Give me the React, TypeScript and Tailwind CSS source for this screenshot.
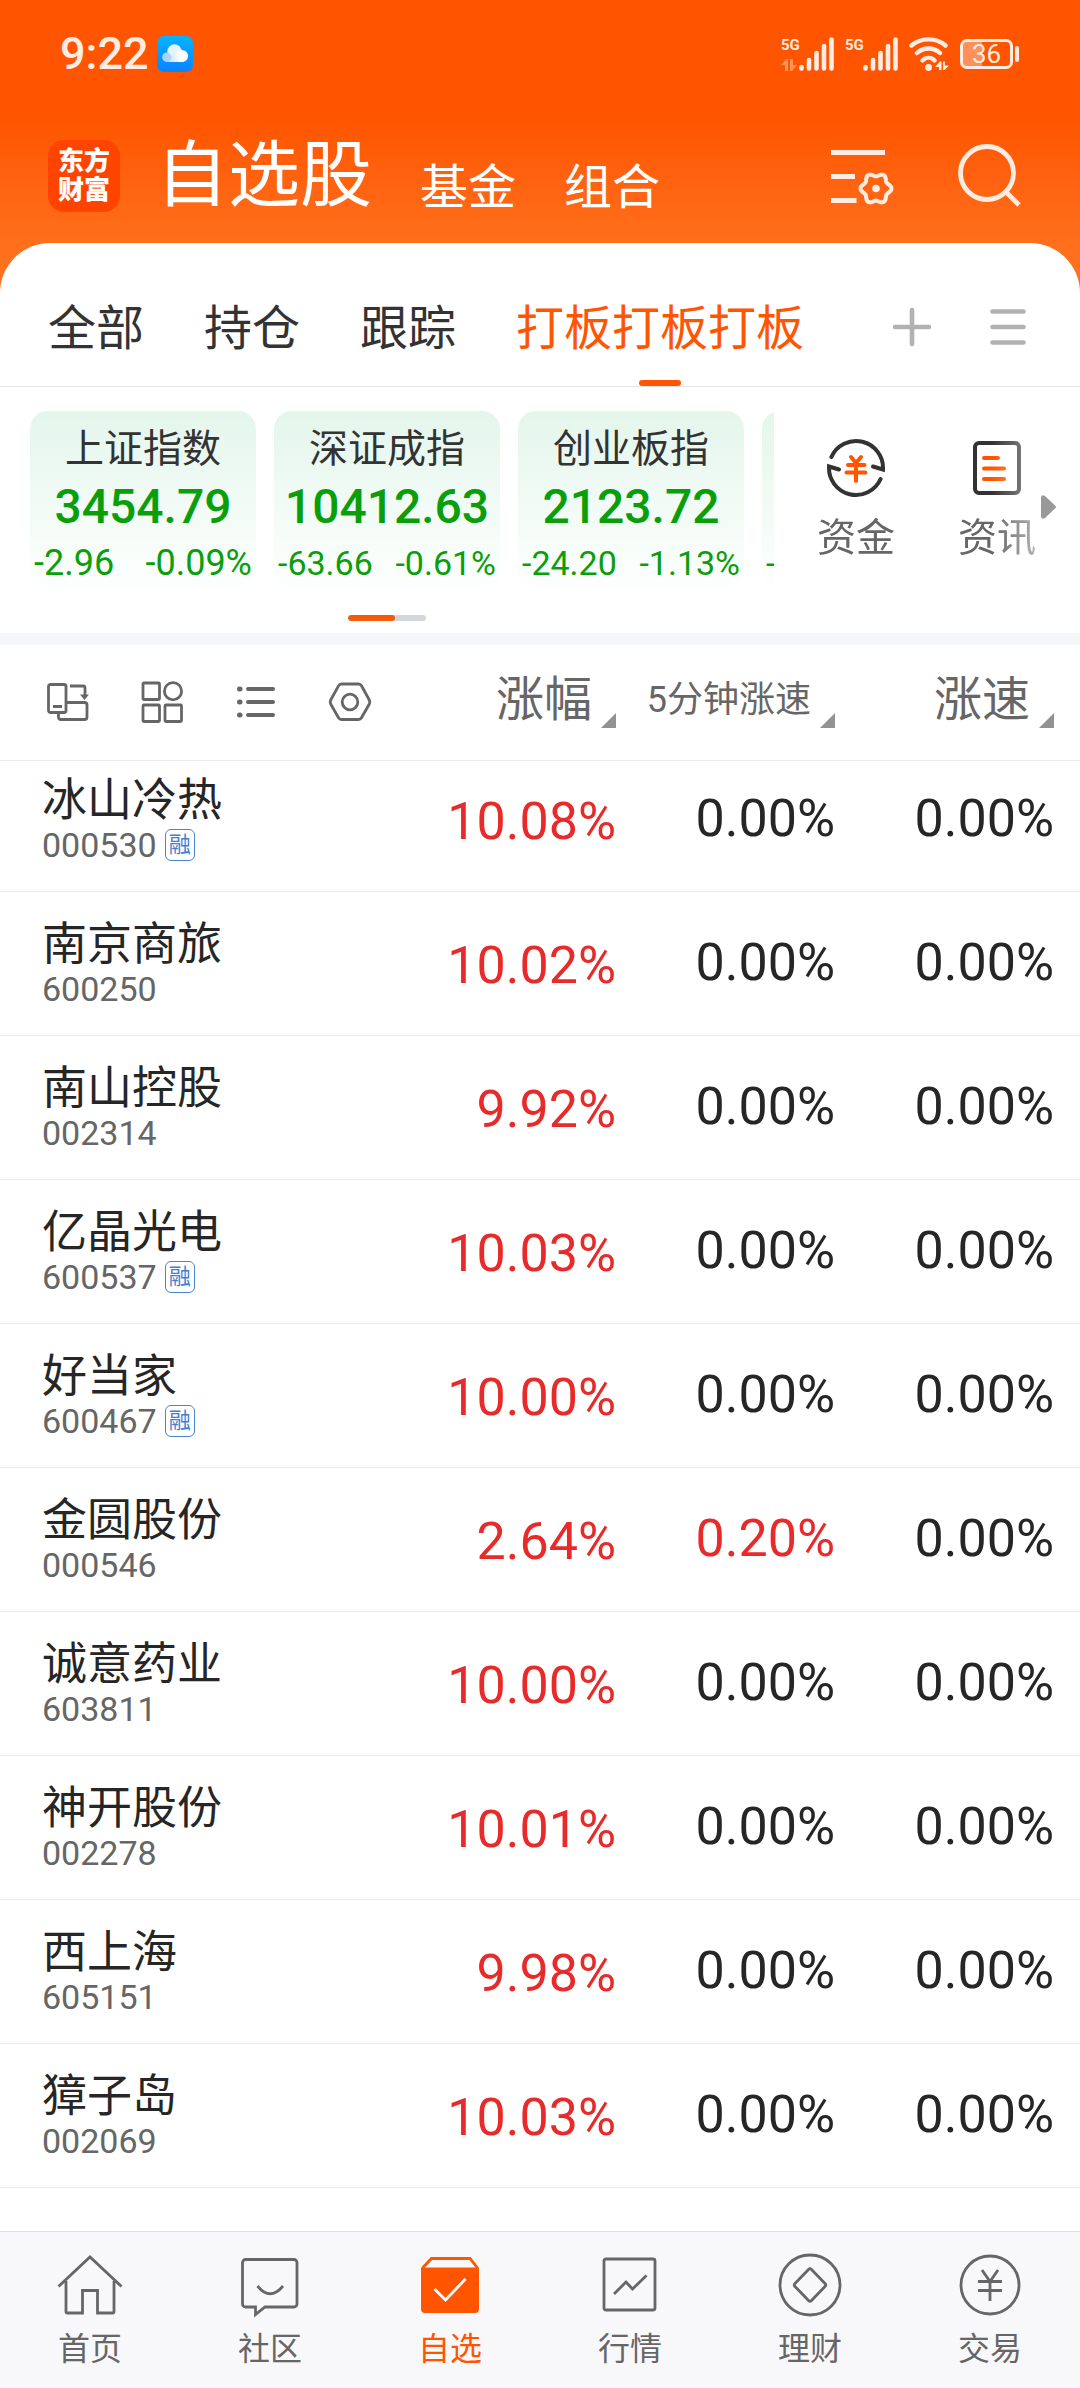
import React from "react";

type Stock = { name: string; code: string; margin?: boolean; change: string; fiveMin: string; speed: string };

const stocks: Stock[] = [
  { name: "冰山冷热", code: "000530", margin: true, change: "10.08%", fiveMin: "0.00%", speed: "0.00%" },
  { name: "南京商旅", code: "600250", change: "10.02%", fiveMin: "0.00%", speed: "0.00%" },
  { name: "南山控股", code: "002314", change: "9.92%", fiveMin: "0.00%", speed: "0.00%" },
  { name: "亿晶光电", code: "600537", margin: true, change: "10.03%", fiveMin: "0.00%", speed: "0.00%" },
  { name: "好当家", code: "600467", margin: true, change: "10.00%", fiveMin: "0.00%", speed: "0.00%" },
  { name: "金圆股份", code: "000546", change: "2.64%", fiveMin: "0.20%", speed: "0.00%" },
  { name: "诚意药业", code: "603811", change: "10.00%", fiveMin: "0.00%", speed: "0.00%" },
  { name: "神开股份", code: "002278", change: "10.01%", fiveMin: "0.00%", speed: "0.00%" },
  { name: "西上海", code: "605151", change: "9.98%", fiveMin: "0.00%", speed: "0.00%" },
  { name: "獐子岛", code: "002069", change: "10.03%", fiveMin: "0.00%", speed: "0.00%" },
];

const indices = [
  { name: "上证指数", value: "3454.79", diff: "-2.96", pct: "-0.09%", size: "text-[36px]" },
  { name: "深证成指", value: "10412.63", diff: "-63.66", pct: "-0.61%", size: "text-[34px]" },
  { name: "创业板指", value: "2123.72", diff: "-24.20", pct: "-1.13%", size: "text-[34px]" },
  { name: "", value: "", diff: "-", pct: "", size: "text-[34px]" },
];

function gearPath(cx: number, cy: number) {
  const pts: string[] = [];
  for (let i = 0; i < 72; i++) {
    const a = (i / 72) * Math.PI * 2;
    const r = 13.8 + 1.7 * Math.cos(6 * a);
    pts.push(`${(cx + r * Math.cos(a)).toFixed(2)} ${(cy + r * Math.sin(a)).toFixed(2)}`);
  }
  return `M${pts.join("L")}Z`;
}

function Signal({ data }: { data?: boolean }) {
  return (
    <div className="flex items-end">
      <div className="flex h-[34px] w-[18px] flex-col justify-between">
        <span className="text-[15px] leading-4 font-bold">5G</span>
        {data && (
          <svg className="h-3 w-4 opacity-40" viewBox="0 0 16 12" fill="currentColor" aria-hidden="true">
            <path d="M0 6L5 0H7V12H4V6ZM9 0H12V6H16L11 12H9Z" />
          </svg>
        )}
      </div>
      <svg className="h-[34px] w-[35px]" viewBox="0 0 35 34" stroke="currentColor" strokeWidth="4.6" strokeLinecap="round" aria-hidden="true">
        <path d="M2.5 30V31.5M10 23V31.5M17.5 16V31.5M25 9V31.5M32.5 2.5V31.5" />
      </svg>
    </div>
  );
}

function StatusBar() {
  return (
    <div className="flex h-[108px] items-center justify-between pr-[61px] pl-[60px] text-[#ffece3]">
      <div className="flex items-center gap-2">
        <span className="text-[45px] leading-[48px] font-medium">9:22</span>
        <svg className="size-9" viewBox="0 0 36 36" aria-label="云" role="img">
          <defs>
            <linearGradient id="sky" x1="0" y1="0" x2="0" y2="1">
              <stop offset="0" stopColor="#05b4ff" />
              <stop offset="1" stopColor="#0a82ff" />
            </linearGradient>
            <linearGradient id="puff" x1="0" y1="0" x2="1" y2="0">
              <stop offset="0" stopColor="#bfe0ff" />
              <stop offset="0.6" stopColor="#fff" />
            </linearGradient>
          </defs>
          <rect width="36" height="36" rx="7" fill="url(#sky)" />
          <circle cx="17.5" cy="15.5" r="7.2" fill="#e3f3ff" />
          <path d="M10 26C7 26 5.2 23.8 5.2 21.3C5.2 18.6 7.2 16.6 9.5 16.6C12 16.6 13 18 13.5 19.5L18 26Z" fill="#a9d4ff" />
          <path d="M11 26C15 24 16 14 24.5 14C28.5 14 31 16.8 31 20C31 23.4 28.4 26 25 26Z" fill="url(#puff)" />
        </svg>
      </div>
      <div className="flex items-center gap-[11px]">
        <Signal data />
        <Signal />
        <svg className="h-[34px] w-10" viewBox="0 0 40 34" fill="none" stroke="currentColor" strokeWidth="4.4" strokeLinecap="round" aria-hidden="true">
          <path d="M2.5 8.5C11.5 0.3 27.5 0.3 36.5 8.5M8 16C14.500 10 24.500 10 31 16M13.500 23.500C17 20 22 20 25.500 23.500" />
          <circle cx="19.500" cy="30.500" r="3.400" fill="currentColor" stroke="none" />
          <path d="M26 30L31 24.500H32.500V33H30V30ZM34 24.500H36V28.500H40L35.500 33H34Z" fill="currentColor" stroke="none" />
        </svg>
        <div className="flex items-center gap-[2px]">
          <div className="flex h-[30px] w-[53px] items-center rounded-[7px] border-[3px] border-current bg-linear-to-r from-white/35 from-40% to-transparent to-40%">
            <span className="w-full text-center text-[26px] leading-6">36</span>
          </div>
          <div className="h-4 w-1 rounded-xs bg-current" />
        </div>
      </div>
    </div>
  );
}

function TitleBar() {
  return (
    <header className="flex h-[135px] items-center pr-[58px] pl-12 text-white">
      <div className="flex size-[72px] shrink-0 flex-col items-center justify-center rounded-2xl bg-[#ff4400] text-[26px] leading-[29px] font-black">
        <span>东方</span>
        <span>财富</span>
      </div>
      <nav className="ml-9 flex flex-1 items-end gap-12">
        <a href="#watchlist" className="text-[72px] leading-[80px]">自选股</a>
        <a href="#fund" className="text-[48px] leading-[56px]">基金</a>
        <a href="#portfolio" className="text-[48px] leading-[56px]">组合</a>
      </nav>
      <div className="flex items-center gap-16 text-[#ffece0]">
        <button type="button" aria-label="列表设置">
          <svg className="h-16 w-16" viewBox="0 0 64 64" fill="none" stroke="currentColor" strokeWidth="4.800" aria-hidden="true">
            <path d="M1 8.500H55M1 32.500H25M1 56.500H26.500" />
            <path d={gearPath(46, 44.500)} strokeWidth="4" strokeLinejoin="round" />
            <circle cx="46" cy="44.500" r="3.800" fill="currentColor" stroke="none" />
          </svg>
        </button>
        <button type="button" aria-label="搜索">
          <svg className="h-16 w-16" viewBox="0 0 64 64" fill="none" stroke="currentColor" strokeWidth="4.800" aria-hidden="true">
            <circle cx="29" cy="29" r="26.500" />
            <path d="M47.500 47.500L61 61" />
          </svg>
        </button>
      </div>
    </header>
  );
}

function GroupTabs() {
  return (
    <div className="flex h-36 items-stretch rounded-t-[50px] border-b border-[#e6e6e6] bg-white pr-[52px] pl-12 text-[48px] leading-[56px] text-[#333]">
      <nav className="flex flex-1 gap-[60px]">
        {["全部", "持仓", "跟踪"].map((t) => (
          <button key={t} type="button" className="pt-7">{t}</button>
        ))}
        <button type="button" aria-current="true" className="relative pt-7 text-[#ff5500]">
          打板打板打板
          <span className="absolute bottom-0 left-1/2 h-1.5 w-[42px] -translate-x-1/2 rounded-full bg-[#ff5500]" />
        </button>
      </nav>
      <div className="flex items-center gap-14 pt-6 text-[#b2b2b2]">
        <button type="button" aria-label="添加分组">
          <svg className="size-10" viewBox="0 0 40 40" stroke="currentColor" strokeWidth="4.600" strokeLinecap="round" aria-hidden="true">
            <path d="M3 20H37M20 3V37" />
          </svg>
        </button>
        <button type="button" aria-label="分组菜单">
          <svg className="size-10" viewBox="0 0 40 40" stroke="currentColor" strokeWidth="4.600" strokeLinecap="round" aria-hidden="true">
            <path d="M4.500 4.500H35.500M4.500 20H35.500M4.500 35.500H35.500" />
          </svg>
        </button>
      </div>
    </div>
  );
}

function IndexStrip() {
  return (
    <section className="flex border-b-[12px] border-[#f5f6fa] bg-white pt-6 pb-3">
      <div className="min-w-0 flex-1">
        <div className="flex gap-[18px] overflow-hidden pl-[30px]">
          {indices.map((x, i) => (
            <div key={i} className="flex h-[178px] w-[226px] shrink-0 flex-col rounded-[18px] bg-linear-to-b from-[#e4f6ec] to-[#fdfffe] pt-[14px] text-center text-[#0a9f0a]">
              <div className="h-12 text-[39px] leading-[48px] text-[#333]">{x.name}</div>
              <div className="mt-1 h-[60px] text-[48px] leading-[60px] font-medium">{x.value}</div>
              <div className={`mt-2 flex justify-between px-1 leading-9 ${x.size}`}>
                <span>{x.diff}</span>
                <span>{x.pct}</span>
              </div>
            </div>
          ))}
        </div>
        <div className="mx-auto mt-[26px] h-1.5 w-[78px] overflow-hidden rounded-full bg-[#d3d7db]">
          <div className="h-full w-3/5 rounded-full bg-[#f55a0a]" />
        </div>
      </div>
      <div className="flex w-[306px] shrink-0 items-start pt-[27px] pl-[43px] text-[39px] leading-[48px] text-[#666]">
        <div className="flex gap-[63px] [mask-image:linear-gradient(to_right,black_80%,rgba(0,0,0,0.5))]">
          <button type="button" className="flex flex-col items-center gap-4">
            <svg className="size-[60px]" viewBox="0 0 60 60" fill="none" stroke="#333" strokeWidth="4" strokeLinecap="round" aria-hidden="true">
              <path d="M5.400 19A27 27 0 0 1 57 31.500L47 28.500M54.600 41A27 27 0 0 1 3 28.500L13 31.500" />
              <path d="M25 19L30 25L35 19M22 27H38.500M20.500 34.500H39.500M30 26V43" stroke="#ff5500" />
            </svg>
            资金
          </button>
          <button type="button" className="flex flex-col items-center gap-4">
            <svg className="size-[60px]" viewBox="0 0 60 60" fill="none" stroke="#333" strokeWidth="4" strokeLinecap="round" aria-hidden="true">
              <rect x="8" y="5" width="44" height="50" rx="4" />
              <path d="M17 20H31M17 30.500H37M17 41H37" stroke="#ff5500" />
            </svg>
            资讯
          </button>
        </div>
        <button type="button" aria-label="更多" className="mt-[57px] ml-[5px]">
          <svg className="h-6 w-[15px]" viewBox="0 0 15 24" fill="#999" aria-hidden="true">
            <path d="M0 2Q1 -1 4 1L14 10.500Q16 12 14 13.500L4 23Q1 25 0 22Z" />
          </svg>
        </button>
      </div>
    </section>
  );
}

function ToolIcon({ label, children }: { label: string; children: React.ReactNode }) {
  return (
    <button type="button" aria-label={label}>
      <svg className="size-11" viewBox="0 0 44 44" fill="none" stroke="currentColor" strokeWidth="2.800" aria-hidden="true">
        {children}
      </svg>
    </button>
  );
}

function SortHeader({ label, small }: { label: string; small?: boolean }) {
  return (
    <th scope="col" className="w-[219px] pr-[26px] text-right align-middle font-normal">
      <button type="button" className="inline-flex h-[52px] items-end gap-[9px] whitespace-nowrap">
        <span className={small ? "text-[36px] leading-[56px]" : "text-[48px] leading-[56px]"}>{label}</span>
        <svg className="size-[15px]" viewBox="0 0 15 15" fill="#929295" aria-hidden="true">
          <path d="M15 0V15H0Z" />
        </svg>
      </button>
    </th>
  );
}

function StockTable() {
  return (
    <table className="w-full table-fixed border-collapse bg-white">
      <thead>
        <tr className="h-[115px] border-b border-[#ececec] text-[#666]">
          <th scope="col" aria-label="名称" className="pl-[46px] text-left font-normal">
            <div className="flex items-center gap-[50px]">
              <ToolIcon label="横屏">
                <rect x="2.500" y="4.500" width="17.500" height="28" rx="2" />
                <path d="M7 26.500H16M12.500 33V37a2.500 2.500 0 0 0 2.500 2.500H38.500a2.500 2.500 0 0 0 2.500 -2.500V25a2.500 2.500 0 0 0 -2.500 -2.500H20.500M24 6H37a2 2 0 0 1 2 2V15" />
                <path d="M34 14.500H43L38.500 20Z" fill="currentColor" stroke="none" />
              </ToolIcon>
              <ToolIcon label="宫格">
                <rect x="3" y="3" width="16.500" height="16.500" rx="1" />
                <rect x="3" y="25" width="16.500" height="16.500" rx="1" />
                <rect x="25" y="25" width="16.500" height="16.500" rx="1" />
                <circle cx="33" cy="11.200" r="8.600" />
              </ToolIcon>
              <ToolIcon label="列表">
                <path d="M14 9H39M14 22H39M14 35H39" strokeWidth="4" strokeLinecap="round" />
                <path d="M5.500 9H6M5.500 22H6M5.500 35H6" strokeWidth="5" strokeLinecap="round" />
              </ToolIcon>
              <ToolIcon label="设置">
                <path d="M13.500 4H30.500Q32.500 4 33.500 5.800L41.300 20Q42.300 22 41.300 24L33.500 37.800Q32.500 39.500 30.500 39.500H13.500Q11.500 39.500 10.500 37.800L2.700 24Q1.700 22 2.700 20L10.500 5.800Q11.500 4 13.500 4Z" />
                <circle cx="22" cy="22" r="7.800" />
              </ToolIcon>
            </div>
          </th>
          <SortHeader label="涨幅" />
          <SortHeader label="5分钟涨速" small />
          <SortHeader label="涨速" />
        </tr>
      </thead>
      <tbody>
        {stocks.map((s) => (
          <tr key={s.code} className="h-36 border-b border-[#ececec] text-right align-bottom text-[52px] leading-[60px] text-[#262626] first:h-[131px]">
            <td className="pb-7 pl-[42px] text-left">
              <div className="text-[45px] leading-[52px]">{s.name}</div>
              <div className="flex h-9 items-center gap-2 text-[34px] leading-9 text-[#666]">
                {s.code}
                {s.margin && (
                  <span className="flex h-8 w-[30px] items-center justify-center rounded-md border border-[#4a86cf] text-[22px] leading-6 text-[#3f80d0]">融</span>
                )}
              </div>
            </td>
            <td className="pr-[26px] pb-[39px] text-[#e92a2a]">{s.change}</td>
            <td className={s.fiveMin === "0.00%" ? "pr-[26px] pb-[42px]" : "pr-[26px] pb-[42px] text-[#e92a2a]"}>{s.fiveMin}</td>
            <td className="pr-[26px] pb-[42px]">{s.speed}</td>
          </tr>
        ))}
      </tbody>
    </table>
  );
}

const navItems = [
  { label: "首页", icon: <path d="M1.500 32.500L33 3L64.500 32.500M9 27V57.500Q9 59 10.500 59H25.500V36.500H40.500V59H55.500Q57 59 57 57.500V27" /> },
  {
    label: "社区",
    icon: (
      <>
        <path d="M8.500 5.500H57a3 3 0 0 1 3 3V50a3 3 0 0 1 -3 3H28L18.500 60.500V53H8.500a3 3 0 0 1 -3 -3V8.500a3 3 0 0 1 3 -3Z" />
        <path d="M20.500 32Q33 47.500 46 32" />
      </>
    ),
  },
  {
    label: "自选",
    active: true,
    icon: (
      <>
        <path d="M5.500 14L14.500 4.500H53L60.500 14" />
        <path d="M4 13.500H62V55a4 4 0 0 1 -4 4H8a4 4 0 0 1 -4 -4Z" fill="currentColor" stroke="none" />
        <path d="M17.500 35L28.500 46L48.500 25" stroke="#fff" />
      </>
    ),
  },
  {
    label: "行情",
    icon: (
      <>
        <rect x="7" y="5" width="51" height="51" rx="2" />
        <path d="M17 40L29 28L35.500 35L49.500 21.500" />
      </>
    ),
  },
  {
    label: "理财",
    icon: (
      <>
        <circle cx="33" cy="31" r="30" />
        <path d="M31.500 15.500Q33 14 34.500 15.500L48 29.500Q49.500 31 48 32.500L34.500 46.500Q33 48 31.500 46.500L18 32.500Q16.500 31 18 29.500Z" />
      </>
    ),
  },
  {
    label: "交易",
    icon: (
      <>
        <circle cx="33" cy="31" r="29" />
        <path d="M25 16L33 27.500L41 16M21 27.500H45M21 36.500H45M33 27.500V47" />
      </>
    ),
  },
];

function BottomNav() {
  return (
    <nav className="grid grid-cols-6 border-t border-[#dedee0] bg-[#f8f8fa] pt-5 pb-[19px] text-[#666]">
      {navItems.map((n) => (
        <a key={n.label} href={`#${n.label}`} className={n.active ? "flex flex-col items-center text-[#ff5500]" : "flex flex-col items-center"}>
          <svg className="size-[66px]" viewBox="0 -2 66 66" fill="none" stroke="currentColor" strokeWidth="2.800" aria-hidden="true">
            {n.icon}
          </svg>
          <span className="mt-[11px] text-[32px] leading-10">{n.label}</span>
        </a>
      ))}
    </nav>
  );
}

export default function App() {
  return (
    <div className="flex min-h-screen flex-col bg-white font-['Roboto','Noto_Sans_CJK_SC',sans-serif]">
      <div className="bg-linear-to-b from-[#ff5500] from-[120px] to-[#ff701c] to-[250px]">
        <StatusBar />
        <TitleBar />
        <GroupTabs />
      </div>
      <IndexStrip />
      <main className="flex-1">
        <StockTable />
      </main>
      <BottomNav />
    </div>
  );
}
